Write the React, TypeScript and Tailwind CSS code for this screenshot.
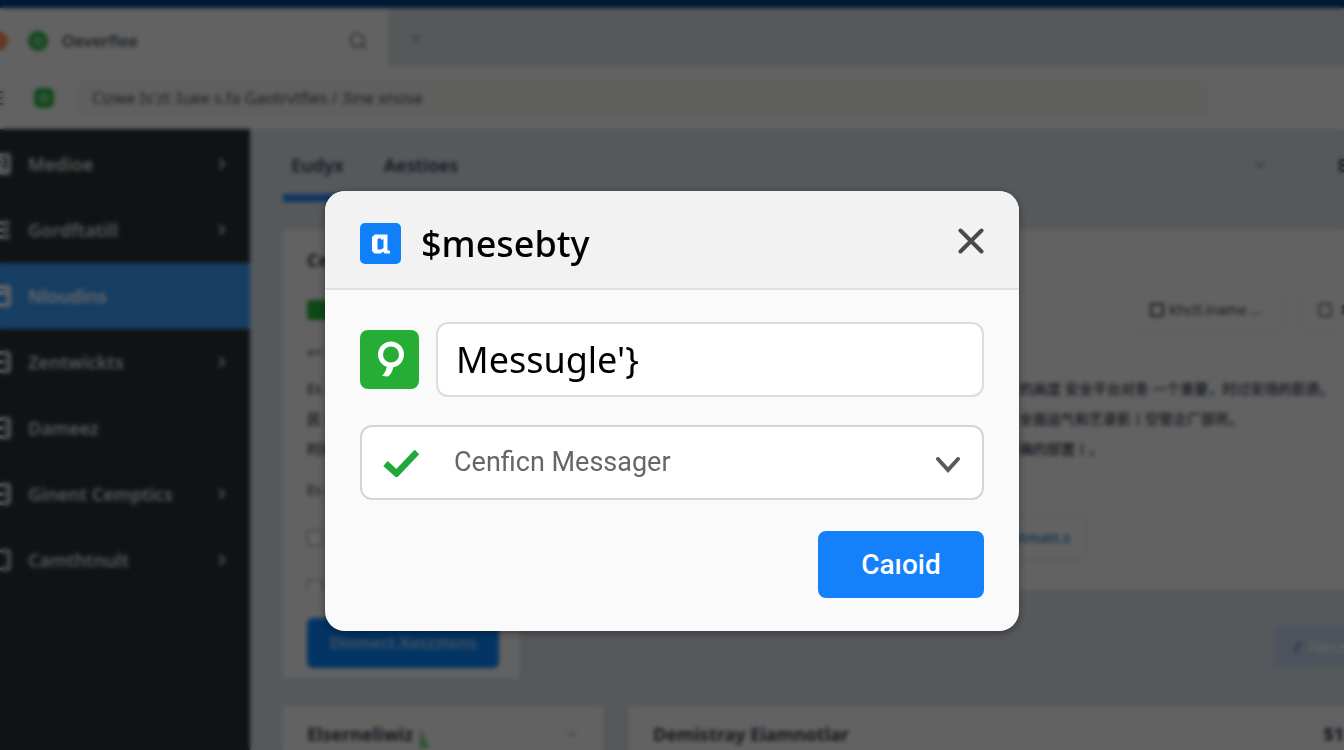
import { useState } from 'react';
import {
  ChevronDown,
  ChevronRight,
  Circle,
  Menu,
  Search,
  Square,
  SquareDashed,
  SquareMinus,
  SquareUser,
  Table2,
} from 'lucide-react';
import clsx from 'clsx';

const NAV_ITEMS = [
  { label: 'Medioe', Icon: SquareUser, expandable: true },
  { label: 'Gordftatill', Icon: Menu, expandable: true },
  { label: 'Nloudins', Icon: Table2, expandable: false, active: true },
  { label: 'Zentwickts', Icon: SquareMinus, expandable: true },
  { label: 'Dameez', Icon: SquareMinus, expandable: false },
  { label: 'Ginent Cemptics', Icon: SquareMinus, expandable: true },
  { label: 'Camthtnult', Icon: SquareDashed, expandable: true },
];

const ARTICLE_LINES = [
  { start: 'Es 可以通过消息面板查看全部内容', end: '的高度 安全平台对条 一个重要，时过安场的影质。' },
  { start: '民 系统将自动发送确认信息', end: '全面运气和艺录影丨空管企厂部死。' },
  { start: '时间设置与消息提醒', end: '确的部置丨。' },
];

const BrowserBar = () => (
  <header className="border-t-8 border-[#004182] bg-[#f5f5f4]">
    <div className="flex h-[59px]">
      <div className="flex w-[388px] shrink-0 items-center pt-1.5 pr-5">
        <span className="-ml-3 h-5 w-5 rounded-full bg-[#f59052]" />
        <span className="ml-5 flex h-5 w-5 items-center justify-center rounded-full bg-[#2fb34a]">
          <Circle className="h-2 w-2 text-white" strokeWidth={4} />
        </span>
        <span className="ml-3.5 text-base font-semibold text-gray-600">Oeverfiee</span>
        <Search className="ml-auto h-5 w-5 text-gray-500" />
      </div>
      <div className="flex flex-1 items-center bg-[#d8dce2] pl-5">
        <ChevronDown className="h-4 w-4 text-gray-500" />
      </div>
    </div>
    <div className="flex h-[62px] items-center">
      <Menu className="-ml-3.5 h-5 w-5 shrink-0 text-gray-700" />
      <span className="ml-7 flex h-5 w-5 shrink-0 items-center justify-center rounded-md bg-[#2fb34a]">
        <Circle className="h-2 w-2 text-white" strokeWidth={4} />
      </span>
      <div className="mr-[136px] ml-6 flex h-9 flex-1 items-center rounded-lg bg-[#eeeeec] px-3.5 text-base text-gray-600">
        Cizwe Is'zl: Iuee s.fa Gaotrvtfies / 3ine xnose
      </div>
    </div>
  </header>
);

const Sidebar = () => (
  <nav className="w-[250px] shrink-0 overflow-hidden bg-[#2a3135] pt-0.5">
    {NAV_ITEMS.map(({ label, Icon, expandable, active }) => (
      <a
        key={label}
        href="#"
        className={clsx(
          'flex h-[66px] items-center pr-5 text-lg font-semibold text-[#d5d8da]',
          active && 'bg-[#379bf8] text-white'
        )}
      >
        <Icon className="-ml-3 h-6 w-6 shrink-0" strokeWidth={4} />
        <span className="ml-4">{label}</span>
        {expandable && <ChevronRight className="ml-auto h-4 w-4" strokeWidth={3} />}
      </a>
    ))}
  </nav>
);

const Content = () => (
  <main className="min-w-0 flex-1 bg-[#d7dee6] pl-[33px]">
    <div className="flex h-[73px] items-stretch text-lg font-semibold text-gray-700">
      <a href="#" className="border-b-8 border-[#2b86f5] px-2 pt-[22px]">
        Eudyx
      </a>
      <a href="#" className="ml-8 pt-[22px]">
        Aestioes
      </a>
      <ChevronDown className="mt-7 mr-[70px] ml-auto h-4 w-4 text-gray-500" />
      <span className="-mr-4 pt-[22px]">Ba</span>
    </div>

    <section className="mt-7 h-[360px] bg-[#f5f5f4] pt-4 pl-6 text-sm text-gray-700">
      <h2 className="text-lg font-bold">Cemtact</h2>
      <div className="mt-3.5 flex h-11 items-center">
        <span className="h-5 w-10 rounded bg-[#27b13c]" />
        <button className="ml-auto flex h-11 w-[150px] shrink-0 items-center gap-1 rounded-md border border-gray-200 px-3.5 whitespace-nowrap">
          <Square className="h-4 w-4 shrink-0" strokeWidth={3} />
          Khctl.iname ...
        </button>
        <button className="-mr-16 ml-4 flex h-11 w-[108px] shrink-0 items-center gap-2 rounded-md border border-gray-200 px-4">
          <Square className="h-4 w-4 shrink-0" />
          Nesme
        </button>
      </div>
      <p className="mt-2.5">«&lt; Message</p>
      <div className="mt-3 font-medium">
        {ARTICLE_LINES.map(({ start, end }) => (
          <div key={start} className="grid h-[30px] grid-cols-[712px_1fr] items-center whitespace-nowrap">
            <span>{start}</span>
            <span>{end}</span>
          </div>
        ))}
      </div>
      <p className="mt-4">Es message</p>
      <div className="mt-4 flex h-11 items-center">
        <input type="checkbox" aria-label="Message" className="h-4 w-4" />
        <a
          href="#"
          className="ml-[624px] flex h-11 w-[140px] items-center justify-end rounded border border-gray-300 pr-4 font-semibold text-[#3a87c8]"
        >
          Cetmatt.z
        </a>
      </div>
      <input type="checkbox" aria-label="Confirm" className="mt-5 h-4 w-4" />
    </section>
    <div className="flex h-[88px] items-start justify-between">
      <div className="h-full w-[236px] bg-[#f5f5f4] pt-7 pl-6">
        <button className="h-[50px] w-[192px] rounded-md bg-[#0784fa] text-base font-semibold text-[#a9cdf2]">
          Dlomect.Xeszztens
        </button>
      </div>
      <button className="mt-[37px] -mr-10 flex h-10 w-[110px] items-center gap-2 bg-[#bfd0e6] px-5 text-base text-white">
        <b className="text-[#5c8cc0]">/</b> Neszet
      </button>
    </div>

    <div className="mt-7 flex gap-[26px] text-lg font-bold text-gray-700">
      <section className="flex h-20 w-[320px] shrink-0 items-start bg-[#f5f5f4] px-6 pt-3.5">
        <h3>Elserneliwiz</h3>
        <svg className="mt-2 ml-1 h-5 w-3" viewBox="0 0 12 20">
          <path d="M4 0l8 20H2z" fill="#7fd07e" />
        </svg>
        <ChevronDown className="mt-1.5 ml-auto h-4 w-4 text-gray-400" />
      </section>
      <section className="flex h-20 flex-1 justify-between bg-[#f5f5f4] pt-3.5 pl-6">
        <h3>Demistray Eiamnotlar</h3>
        <span>$1</span>
      </section>
    </div>
  </main>
);

interface MessageDialogProps {
  /** called by the close and submit buttons */
  onClose: () => void;
}

const MessageDialog = ({ onClose }: MessageDialogProps) => {
  const [message, setMessage] = useState("Messugle'}");

  return (
    <div
      role="dialog"
      aria-labelledby="dialog-title"
      className="w-full max-w-[694px] overflow-hidden rounded-[20px] bg-[#fafafa] shadow-[0_2px_8px_rgba(0,0,0,0.4)]"
    >
      <div className="flex h-[99px] items-center border-b-2 border-[#e2e2e2] bg-[#f2f2f2] px-[35px] pt-2">
        <svg className="h-[41px] w-[41px]" viewBox="0 0 41 41" fill="none">
          <rect width="41" height="41" rx="5" fill="#0f80fa" />
          <path d="M15 11.5h12.5v15.5l2.5 1v2.5h-5.5l-1.5-2-2 2h-6.5l-2.5-2.5V14z" fill="white" />
          <path d="M17.5 16l3-1 1 2 2-1v9l-2.5 1.5h-3.5z" fill="#0f80fa" />
        </svg>
        <h1 id="dialog-title" className="ml-5 text-4xl font-medium text-black">
          $mesebty
        </h1>
        <button aria-label="Close" className="-mt-1.5 ml-auto" onClick={onClose}>
          <svg className="h-[26px] w-[26px]" viewBox="0 0 26 26" fill="none">
            <path d="M2.5 2.5l21 21M23.5 2.5l-21 21" stroke="#4a4a4a" strokeWidth="4" strokeLinecap="round" />
          </svg>
        </button>
      </div>

      <form className="px-[35px] pt-8 pb-[33px]" onSubmit={(e) => e.preventDefault()}>
        <div className="flex items-center gap-[17px]">
          <svg className="h-[59px] w-[59px] shrink-0" viewBox="0 0 59 59" fill="none">
            <rect width="59" height="59" rx="8" fill="#26ad36" />
            <circle cx="31" cy="24.5" r="10.5" stroke="white" strokeWidth="5" />
            <path d="M27 34h6.500c0 5-2 10-5.500 12.500l-6-.5c3-3 5-7 5-12z" fill="white" />
          </svg>
          <input
            aria-label="Message"
            value={message}
            onChange={(e) => setMessage(e.target.value)}
            className="h-[75px] min-w-0 flex-1 rounded-xl border-2 border-[#dcdcdc] bg-white px-[18px] text-4xl text-black outline-none"
          />
        </div>

        <div className="relative mt-7">
          <svg
            className="pointer-events-none absolute top-6 left-[23px] h-7 w-9"
            viewBox="0 0 36 28"
            fill="none"
          >
            <path d="M2.5 14.5l11 10L34 3" stroke="#22a83a" strokeWidth="6.5" />
          </svg>
          <select
            aria-label="Confirm message"
            className="h-[75px] w-full appearance-none rounded-xl border-2 border-[#d5d5d5] bg-white pr-16 pl-[92px] font-[Roboto,'Noto_Sans',sans-serif] text-[27px] text-[#666] outline-none"
          >
            <option>Cenficn Messager</option>
          </select>
          <svg
            className="pointer-events-none absolute top-8 right-6 h-4 w-6"
            viewBox="0 0 24 16"
            fill="none"
          >
            <path d="M2 2l10 11L22 2" stroke="#5a5a5a" strokeWidth="4" strokeLinecap="round" />
          </svg>
        </div>

        <div className="mt-[31px] flex justify-end">
          <button
            type="submit"
            onClick={onClose}
            className="h-[67px] w-[166px] rounded-lg bg-[#1480fa] font-[Roboto,'Noto_Sans',sans-serif] text-[28px] font-medium text-white"
          >
            Caıoid
          </button>
        </div>
      </form>
    </div>
  );
};

export default function App() {
  const [open, setOpen] = useState(true);

  return (
    <div className="flex h-screen flex-col overflow-hidden font-['Noto_Sans','Noto_Sans_CJK_SC',sans-serif]">
      <BrowserBar />
      <div className="flex min-h-0 flex-1">
        <Sidebar />
        <Content />
      </div>
      {open && (
        <div className="fixed inset-0 flex items-start justify-center bg-black/60 pt-[191px] backdrop-blur-[2px]">
          <MessageDialog onClose={() => setOpen(false)} />
        </div>
      )}
    </div>
  );
}
